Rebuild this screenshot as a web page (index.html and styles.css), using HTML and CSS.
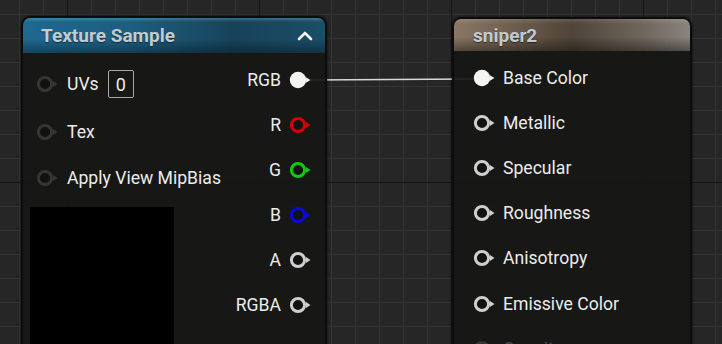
FILE: index.html
```html
<!DOCTYPE html>
<html lang="en">
<head>
<meta charset="UTF-8">
<title>Material Graph</title>
<link rel="stylesheet" href="styles.css">
</head>
<body>
<div class="graph">
  <svg class="wire" width="722" height="344">
    <path d="M310 80 C 390 80, 392 79, 474 79" />
  </svg>

  <div class="node texture-node">
    <div class="node-header header-blue">
      <span class="node-title">Texture Sample</span>
      <svg class="chevron" width="16" height="10"><polyline points="2,8 8,2 14,8" /></svg>
    </div>
    <div class="node-body">
      <div class="inputs">
        <div class="pin-row in-row first">
          <svg class="pin" width="24" height="18"><circle class="ring dim" cx="9" cy="9" r="6.6"/><polygon class="tri dim-fill" points="17,6 21.5,9 17,12"/></svg>
          <span class="label">UVs</span>
          <span class="value-box">0</span>
        </div>
        <div class="pin-row in-row second">
          <svg class="pin" width="24" height="18"><circle class="ring dim" cx="9" cy="9" r="6.6"/><polygon class="tri dim-fill" points="17,6 21.5,9 17,12"/></svg>
          <span class="label">Tex</span>
        </div>
        <div class="pin-row in-row third">
          <svg class="pin" width="24" height="18"><circle class="ring dim" cx="9" cy="9" r="6.6"/><polygon class="tri dim-fill" points="17,6 21.5,9 17,12"/></svg>
          <span class="label">Apply View MipBias</span>
        </div>
        <div class="preview"></div>
      </div>
      <div class="outputs">
        <div class="pin-row out-row">
          <span class="label">RGB</span>
          <svg class="pin" width="24" height="18"><circle class="filled" cx="9" cy="9" r="8.2"/><polygon class="tri white-fill" points="16.5,6 21.5,9 16.5,12"/></svg>
        </div>
        <div class="pin-row out-row">
          <span class="label">R</span>
          <svg class="pin" width="24" height="18"><circle class="ring red" cx="9" cy="9" r="6.6"/><polygon class="tri red-fill" points="17,6 21.5,9 17,12"/></svg>
        </div>
        <div class="pin-row out-row">
          <span class="label">G</span>
          <svg class="pin" width="24" height="18"><circle class="ring green" cx="9" cy="9" r="6.6"/><polygon class="tri green-fill" points="17,6 21.5,9 17,12"/></svg>
        </div>
        <div class="pin-row out-row">
          <span class="label">B</span>
          <svg class="pin" width="24" height="18"><circle class="ring blue" cx="9" cy="9" r="6.6"/><polygon class="tri blue-fill" points="17,6 21.5,9 17,12"/></svg>
        </div>
        <div class="pin-row out-row">
          <span class="label">A</span>
          <svg class="pin" width="24" height="18"><circle class="ring grey" cx="9" cy="9" r="6.6"/><polygon class="tri grey-fill" points="17,6 21.5,9 17,12"/></svg>
        </div>
        <div class="pin-row out-row">
          <span class="label">RGBA</span>
          <svg class="pin" width="24" height="18"><circle class="ring grey" cx="9" cy="9" r="6.6"/><polygon class="tri grey-fill" points="17,6 21.5,9 17,12"/></svg>
        </div>
      </div>
    </div>
  </div>

  <div class="node material-node">
    <div class="node-header header-brown">
      <span class="node-title">sniper2</span>
    </div>
    <div class="node-body">
      <div class="mat-inputs">
        <div class="pin-row mat-row">
          <svg class="pin" width="24" height="18"><circle class="filled" cx="9" cy="9" r="8.2"/><polygon class="tri white-fill" points="16.5,6 21.5,9 16.5,12"/></svg>
          <span class="label">Base Color</span>
        </div>
        <div class="pin-row mat-row">
          <svg class="pin" width="24" height="18"><circle class="ring grey" cx="9" cy="9" r="6.6"/><polygon class="tri grey-fill" points="17,6 21.5,9 17,12"/></svg>
          <span class="label">Metallic</span>
        </div>
        <div class="pin-row mat-row">
          <svg class="pin" width="24" height="18"><circle class="ring grey" cx="9" cy="9" r="6.6"/><polygon class="tri grey-fill" points="17,6 21.5,9 17,12"/></svg>
          <span class="label">Specular</span>
        </div>
        <div class="pin-row mat-row">
          <svg class="pin" width="24" height="18"><circle class="ring grey" cx="9" cy="9" r="6.6"/><polygon class="tri grey-fill" points="17,6 21.5,9 17,12"/></svg>
          <span class="label">Roughness</span>
        </div>
        <div class="pin-row mat-row">
          <svg class="pin" width="24" height="18"><circle class="ring grey" cx="9" cy="9" r="6.6"/><polygon class="tri grey-fill" points="17,6 21.5,9 17,12"/></svg>
          <span class="label">Anisotropy</span>
        </div>
        <div class="pin-row mat-row">
          <svg class="pin" width="24" height="18"><circle class="ring grey" cx="9" cy="9" r="6.6"/><polygon class="tri grey-fill" points="17,6 21.5,9 17,12"/></svg>
          <span class="label">Emissive Color</span>
        </div>
        <div class="pin-row mat-row disabled">
          <svg class="pin" width="24" height="18"><circle class="ring dim" cx="9" cy="9" r="6.6"/><polygon class="tri dim-fill" points="17,6 21.5,9 17,12"/></svg>
          <span class="label">Opacity</span>
        </div>
      </div>
    </div>
  </div>
</div>
</body>
</html>
```

FILE: styles.css
```css
body {
  margin: 0;
  background: #262626;
  font-family: Roboto, "Liberation Sans", sans-serif;
  overflow: hidden;
}

.graph {
  position: relative;
  width: 722px;
  height: 344px;
  overflow: hidden;
  background-color: #262626;
  background-image:
    linear-gradient(to right, #151515 1px, transparent 1px),
    linear-gradient(to bottom, #151515 1px, transparent 1px),
    linear-gradient(to right, #353535 1px, transparent 1px),
    linear-gradient(to bottom, #353535 1px, transparent 1px);
  background-size: 192px 192px, 192px 192px, 24px 24px, 24px 24px;
  background-position: 67px 182px, 67px 182px, 19px 14px, 19px 14px;
}

.wire {
  position: absolute;
  left: 0;
  top: 0;
}
.wire path {
  fill: none;
  stroke: #d8d8d8;
  stroke-width: 1.6;
}

/* nodes sit on a free canvas, so they are placed by coordinates */
.node {
  position: absolute;
  box-sizing: border-box;
  height: 400px;
  border: 2px solid #0c0c0c;
  border-radius: 9px 9px 0 0;
  background: rgba(22, 23, 21, 0.92);
  box-shadow: 0 0 3px rgba(0, 0, 0, 0.6);
}
.texture-node {
  left: 21px;
  top: 16px;
  width: 306px;
}
.material-node {
  left: 452px;
  top: 17px;
  width: 240px;
}

.node-header {
  display: flex;
  align-items: center;
  justify-content: space-between;
  border-radius: 7px 7px 0 0;
  padding: 0 12px 0 18px;
}
.header-blue {
  height: 35px;
  background:
    linear-gradient(to bottom, rgba(120, 190, 230, 0.35) 0, rgba(255, 255, 255, 0) 4px, rgba(0, 0, 0, 0) 60%, rgba(0, 0, 0, 0.35) 100%),
    linear-gradient(to right, #1f6890 0, #1d5e80 35%, #17435a 70%, #1b4e68 100%);
}
.header-brown {
  height: 32px;
  padding-left: 19px;
  background:
    linear-gradient(to bottom, rgba(255, 255, 255, 0.12) 0, rgba(255, 255, 255, 0) 5px, rgba(0, 0, 0, 0) 55%, rgba(0, 0, 0, 0.4) 100%),
    linear-gradient(to right, #8a7865 0, #6e5e4e 25%, #4f4438 50%, #6f665d 80%, #8a847e 100%);
}
.node-title {
  font-size: 19px;
  font-weight: bold;
  color: #c3cbd0;
  text-shadow: 0 1px 1px rgba(0, 0, 0, 0.5);
}
.chevron polyline {
  fill: none;
  stroke: #f2f2f2;
  stroke-width: 2.6;
  stroke-linecap: round;
  stroke-linejoin: round;
}

.node-body {
  display: flex;
  justify-content: space-between;
}

.pin-row {
  display: flex;
  align-items: center;
  color: #ececec;
  font-size: 17.6px;
}
.pin {
  flex: none;
}

.inputs {
  padding-left: 7px;
}
.in-row {
  height: 30px;
  margin-left: 6px;
  gap: 7px;
}
.in-row.first {
  margin-top: 16px;
}
.in-row.second {
  margin-top: 18px;
}
.in-row.third {
  margin-top: 16px;
}
.value-box {
  box-sizing: border-box;
  width: 26px;
  height: 28px;
  margin-left: 2px;
  border: 1px solid #a8a8a8;
  border-radius: 2px;
  display: flex;
  align-items: center;
  justify-content: center;
  font-size: 18px;
}
.preview {
  width: 144px;
  height: 160px;
  margin-top: 14px;
  background: #000;
}

.outputs {
  padding: 4px 12px 0 0;
}
.out-row {
  height: 45px;
  justify-content: flex-end;
  gap: 8px;
}

.mat-inputs {
  padding: 4px 0 0 19px;
}
.mat-row {
  height: 45.2px;
  gap: 6px;
}
.mat-row.disabled {
  color: #4a4a4a;
}

.ring {
  fill: #121212;
  stroke-width: 3;
}
.filled {
  fill: #f4f4f4;
}
.dim { stroke: #353535; }
.red { stroke: #d40000; }
.green { stroke: #12c812; }
.blue { stroke: #0a0ad8; }
.grey { stroke: #cfcfcf; }
.dim-fill { fill: #353535; }
.red-fill { fill: #d40000; }
.green-fill { fill: #12c812; }
.blue-fill { fill: #0a0ad8; }
.grey-fill { fill: #cfcfcf; }
.white-fill { fill: #f0f0f0; }
```
